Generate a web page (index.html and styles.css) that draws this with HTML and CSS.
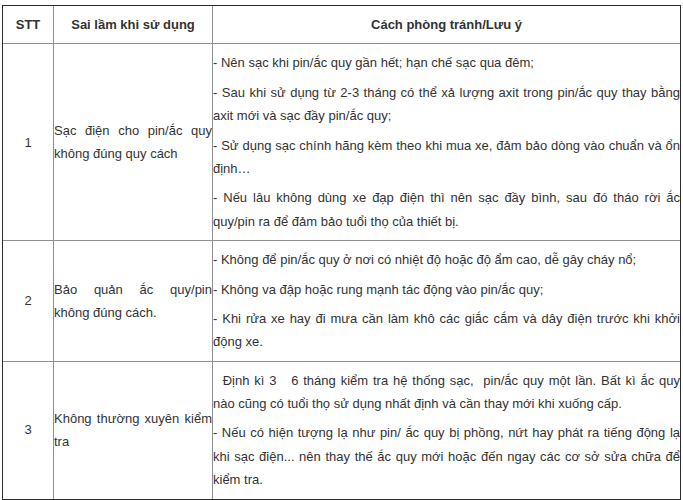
FILE: index.html
```html
<!DOCTYPE html>
<html lang="vi">
<head>
<meta charset="utf-8">
<title>Sai lầm khi sử dụng pin/ắc quy</title>
<link rel="stylesheet" href="styles.css">
</head>
<body>
<div class="page">
<table class="grid">
<thead>
<tr>
<th class="c-stt"><p>STT</p></th>
<th class="c-err"><p>Sai lầm khi sử dụng</p></th>
<th class="c-tip"><p>Cách phòng tránh/Lưu ý</p></th>
</tr>
</thead>
<tbody>
<tr>
<td class="num"><p>1</p></td>
<td class="err"><p>Sạc điện cho pin/ắc quy không đúng quy cách</p></td>
<td class="tip">
<p>- Nên sạc khi pin/ắc quy gần hết; hạn chế sạc qua đêm;</p>
<p>- Sau khi sử dụng từ 2-3 tháng có thể xả lượng axit trong pin/ắc quy thay bằng axit mới và sạc đầy pin/ắc quy;</p>
<p>- Sử dụng sạc chính hãng kèm theo khi mua xe, đảm bảo dòng vào chuẩn và ổn định…</p>
<p>- Nếu lâu không dùng xe đạp điện thì nên sạc đầy bình, sau đó tháo rời ắc quy/pin ra để đảm bảo tuổi thọ của thiết bị.</p>
</td>
</tr>
<tr>
<td class="num"><p>2</p></td>
<td class="err"><p>Bảo quản ắc quy/pin <span class="keep">không đúng cách.</span></p></td>
<td class="tip">
<p>- Không để pin/ắc quy ở nơi có nhiệt độ hoặc độ ẩm cao, dễ gây cháy nổ;</p>
<p>- Không va đập hoặc rung mạnh tác động vào pin/ắc quy;</p>
<p>- Khi rửa xe hay đi mưa cần làm khô các giắc cắm và dây điện trước khi khởi động xe.</p>
</td>
</tr>
<tr>
<td class="num"><p>3</p></td>
<td class="err"><p>Không thường xuyên kiểm tra</p></td>
<td class="tip">
<p>&nbsp; Định kì 3 &nbsp; 6 tháng kiểm tra hệ thống sạc, &nbsp;pin/ắc quy một lần. Bất kì ắc quy <span class="keep">nào cũng</span> có tuổi thọ sử dụng nhất định và cần thay mới khi xuống cấp.</p>
<p>- Nếu có hiện tượng lạ như pin/ ắc quy bị phồng, nứt hay phát ra tiếng động lạ khi sạc điện... nên thay thế ắc quy mới hoặc đến ngay các cơ sở sửa chữa để kiểm tra.</p>
</td>
</tr>
</tbody>
</table>
</div>
</body>
</html>
```
FILE: styles.css
```css
html, body {
  margin: 0;
  background: #fff;
}

body {
  font-family: "Liberation Sans", Arial, sans-serif;
  font-size: 13px;
  color: #333;
}

.page {
  padding: 5px 2px 0;
}

.grid {
  width: 100%;
  table-layout: fixed;
  border-collapse: separate;
  border-spacing: 0;
  border: 1px solid #2b2b2b;
}

.grid th,
.grid td {
  box-sizing: border-box;
  padding: 1px 0;
  border-right: 1px solid #909090;
  border-bottom: 1px solid #909090;
  vertical-align: middle;
}

.grid tr > :last-child {
  border-right: 0;
}

.grid tbody tr:last-child td {
  border-bottom: 0;
}

.grid p {
  margin: 6px 0;
  line-height: 1.8;
}

.grid th {
  font-weight: bold;
  text-align: center;
}

.c-stt {
  width: 51px;
}

.c-err {
  width: 159px;
}

.num {
  text-align: center;
}

.err,
.tip {
  text-align: justify;
}

.keep {
  white-space: nowrap;
}
```
